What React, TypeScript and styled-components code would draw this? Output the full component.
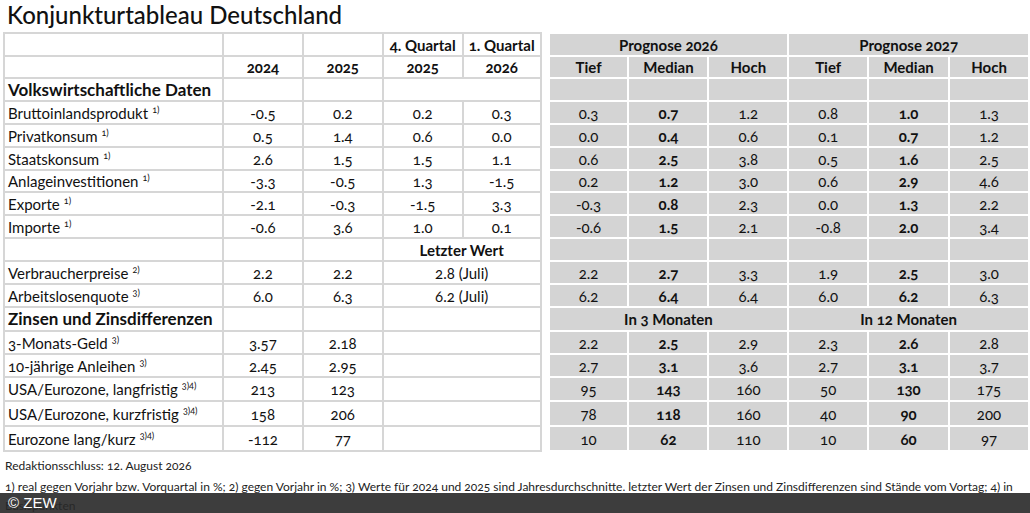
import styled, { createGlobalStyle } from 'styled-components';

const GlobalStyle = createGlobalStyle`
  html, body {
    margin: 0;
    padding: 0;
    background: #fff;
  }
  body {
    font-family: Lato, "Open Sans", sans-serif;
    color: #111;
  }
`;

const Page = styled.div`
  position: relative;
  width: 1030px;
  height: 513px;
  overflow: hidden;
  font-variant-numeric: oldstyle-nums;
`;

const Title = styled.h1`
  margin: 0;
  padding-left: 7px;
  height: 32px;
  line-height: 30px;
  font-size: 24px;
  font-weight: 500;
  color: #111;
`;

const Table = styled.table`
  margin-left: 3px;
  border-collapse: collapse;
  table-layout: fixed;
  font-size: 15px;
`;

type Tone = 'white' | 'grey' | 'gap';

const Row = styled.tr<{ $h: number }>`
  height: ${(p) => p.$h}px;
`;

const Cell = styled.td<{
  $tone: Tone;
  $left?: boolean;
  $bold?: boolean;
  $section?: boolean;
}>`
  padding: 0 3px;
  line-height: 18px;
  white-space: nowrap;
  text-align: ${(p) => (p.$left ? 'left' : 'center')};
  font-weight: ${(p) => (p.$bold ? 700 : 400)};
  font-size: ${(p) => (p.$section ? '17px' : '15px')};
  background: ${(p) => (p.$tone === 'grey' ? '#d4d4d4' : '#fff')};
  border: ${(p) =>
    p.$tone === 'gap'
      ? 'none'
      : p.$tone === 'grey'
      ? '2px solid #fff'
      : '2px solid #d6d6d6'};
`;

const Sup = styled.sup`
  font-size: 9px;
  margin-left: 4px;
  vertical-align: 6px;
  line-height: 0;
`;

const Notes = styled.div`
  padding-left: 5px;
  font-size: 12px;
  color: #222;
`;

const Stamp = styled.div`
  margin-top: 6px;
  line-height: 16px;
`;

const Footnote = styled.p`
  margin: 3px 0 0;
  width: 1015px;
  line-height: 19px;
`;

const CopyBar = styled.div`
  position: absolute;
  left: 0;
  right: 0;
  bottom: 0;
  height: 20px;
  background: rgba(40, 40, 40, 0.9);
  color: #fff;
  font-family: "Liberation Sans", Arial, sans-serif;
  font-size: 15px;
  line-height: 20px;
  padding-left: 8px;
`;

type C = {
  t: string;
  tone: Tone;
  span?: number;
  left?: boolean;
  bold?: boolean;
  section?: boolean;
  sup?: string;
};

const w = (t = '', o: Partial<C> = {}): C => ({ t, tone: 'white', ...o });
const g = (t = '', o: Partial<C> = {}): C => ({ t, tone: 'grey', ...o });
const gap: C = { t: '', tone: 'gap' };

const forecast = (vals: string[]) =>
  vals.map((v, i) => g(v, { bold: i === 1 || i === 4 }));

const emptyGrey = () => [g(), g(), g(), g(), g(), g()];

const dataRow = (label: string, sup: string, own: string[], fc: string[]) => [
  w(label, { left: true, sup }),
  ...own.map((v) => w(v)),
  gap,
  ...forecast(fc),
];

const rateRow = (label: string, sup: string, own: string[], fc: string[]) => [
  w(label, { left: true, sup }),
  ...own.map((v) => w(v)),
  w('', { span: 2 }),
  gap,
  ...forecast(fc),
];

const rows: { h: number; cells: C[] }[] = [
  {
    h: 23,
    cells: [
      w(), w(), w(),
      w('4. Quartal', { bold: true }),
      w('1. Quartal', { bold: true }),
      gap,
      g('Prognose 2026', { span: 3, bold: true }),
      g('Prognose 2027', { span: 3, bold: true }),
    ],
  },
  {
    h: 22,
    cells: [
      w(),
      ...['2024', '2025', '2025', '2026'].map((v) => w(v, { bold: true })),
      gap,
      ...['Tief', 'Median', 'Hoch', 'Tief', 'Median', 'Hoch'].map((v) =>
        g(v, { bold: true })
      ),
    ],
  },
  {
    h: 23,
    cells: [
      w('Volkswirtschaftliche Daten', { left: true, bold: true, section: true }),
      w(), w(), w('', { span: 2 }),
      gap,
      ...emptyGrey(),
    ],
  },
  { h: 23, cells: dataRow('Bruttoinlandsprodukt', '1)', ['-0.5', '0.2', '0.2', '0.3'], ['0.3', '0.7', '1.2', '0.8', '1.0', '1.3']) },
  { h: 23, cells: dataRow('Privatkonsum', '1)', ['0.5', '1.4', '0.6', '0.0'], ['0.0', '0.4', '0.6', '0.1', '0.7', '1.2']) },
  { h: 23, cells: dataRow('Staatskonsum', '1)', ['2.6', '1.5', '1.5', '1.1'], ['0.6', '2.5', '3.8', '0.5', '1.6', '2.5']) },
  { h: 22, cells: dataRow('Anlageinvestitionen', '1)', ['-3.3', '-0.5', '1.3', '-1.5'], ['0.2', '1.2', '3.0', '0.6', '2.9', '4.6']) },
  { h: 23, cells: dataRow('Exporte', '1)', ['-2.1', '-0.3', '-1.5', '3.3'], ['-0.3', '0.8', '2.3', '0.0', '1.3', '2.2']) },
  { h: 23, cells: dataRow('Importe', '1)', ['-0.6', '3.6', '1.0', '0.1'], ['-0.6', '1.5', '2.1', '-0.8', '2.0', '3.4']) },
  {
    h: 23,
    cells: [w(), w(), w(), w('Letzter Wert', { span: 2, bold: true }), gap, ...emptyGrey()],
  },
  {
    h: 23,
    cells: [
      w('Verbraucherpreise', { left: true, sup: '2)' }),
      w('2.2'), w('2.2'), w('2.8 (Juli)', { span: 2 }),
      gap,
      ...forecast(['2.2', '2.7', '3.3', '1.9', '2.5', '3.0']),
    ],
  },
  {
    h: 23,
    cells: [
      w('Arbeitslosenquote', { left: true, sup: '3)' }),
      w('6.0'), w('6.3'), w('6.2 (Juli)', { span: 2 }),
      gap,
      ...forecast(['6.2', '6.4', '6.4', '6.0', '6.2', '6.3']),
    ],
  },
  {
    h: 24,
    cells: [
      w('Zinsen und Zinsdifferenzen', { left: true, bold: true, section: true }),
      w(), w(), w('', { span: 2 }),
      gap,
      g('In 3 Monaten', { span: 3, bold: true }),
      g('In 12 Monaten', { span: 3, bold: true }),
    ],
  },
  { h: 23, cells: rateRow('3-Monats-Geld', '3)', ['3.57', '2.18'], ['2.2', '2.5', '2.9', '2.3', '2.6', '2.8']) },
  { h: 23, cells: rateRow('10-jährige Anleihen', '3)', ['2.45', '2.95'], ['2.7', '3.1', '3.6', '2.7', '3.1', '3.7']) },
  { h: 24, cells: rateRow('USA/Eurozone, langfristig', '3)4)', ['213', '123'], ['95', '143', '160', '50', '130', '175']) },
  { h: 25, cells: rateRow('USA/Eurozone, kurzfristig', '3)4)', ['158', '206'], ['78', '118', '160', '40', '90', '200']) },
  { h: 25, cells: rateRow('Eurozone lang/kurz', '3)4)', ['-112', '77'], ['10', '62', '110', '10', '60', '97']) },
];

const colWidths = [219, 80, 80, 80, 78, 3, 80, 80, 80, 80, 81, 80];

export default function App() {
  return (
    <Page>
      <GlobalStyle />
      <Title>Konjunkturtableau Deutschland</Title>
      <Table>
        <colgroup>
          {colWidths.map((cw, i) => (
            <col key={i} style={{ width: cw }} />
          ))}
        </colgroup>
        <tbody>
          {rows.map((r, ri) => (
            <Row key={ri} $h={r.h}>
              {r.cells.map((c, ci) => (
                <Cell
                  key={ci}
                  colSpan={c.span}
                  $tone={c.tone}
                  $left={c.left}
                  $bold={c.bold}
                  $section={c.section}
                >
                  {c.t}
                  {c.sup && <Sup>{c.sup}</Sup>}
                </Cell>
              ))}
            </Row>
          ))}
        </tbody>
      </Table>
      <Notes>
        <Stamp>Redaktionsschluss: 12. August 2026</Stamp>
        <Footnote>
          1) real gegen Vorjahr bzw. Vorquartal in %; 2) gegen Vorjahr in %; 3)
          Werte für 2024 und 2025 sind Jahresdurchschnitte. letzter Wert der
          Zinsen und Zinsdifferenzen sind Stände vom Vortag; 4) in Basispunkten
        </Footnote>
      </Notes>
      <CopyBar>© ZEW</CopyBar>
    </Page>
  );
}
